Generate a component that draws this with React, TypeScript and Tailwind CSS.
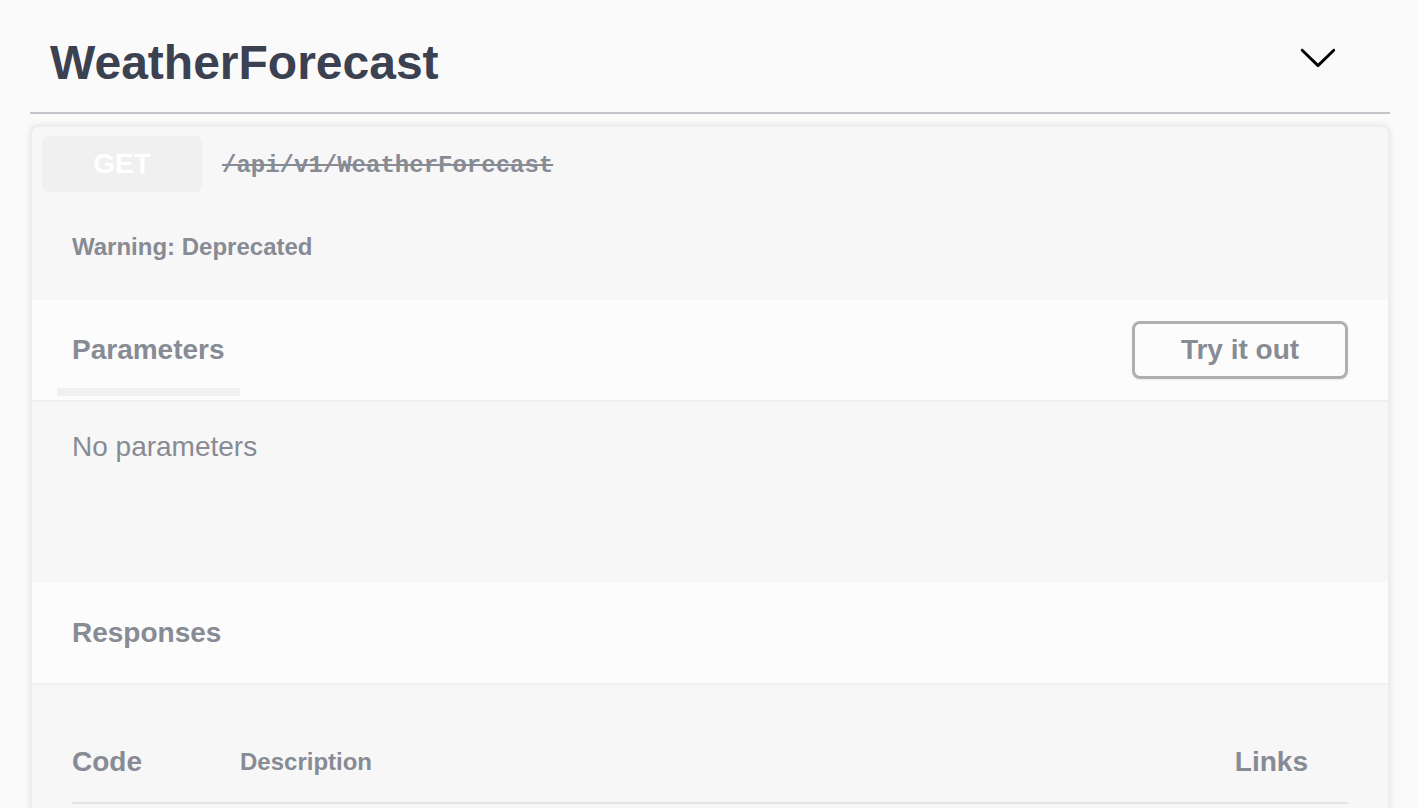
import React from "react";

const Chevron = () => (
  <svg width="40" height="40" viewBox="0 0 20 20" className="mt-[37px] shrink-0">
    <path
      fill="#000"
      d="M17.418 6.109c.272-.268.709-.268.979 0s.271.701 0 .969l-7.908 7.83c-.27.268-.707.268-.979 0l-7.908-7.83c-.27-.268-.27-.701 0-.969.271-.268.709-.268.979 0L10 13.25l7.418-7.141z"
    />
  </svg>
);

const App = () => {
  return (
    <div className="min-h-screen bg-[#fafafa] pl-[30px] pr-[28px] pb-10 font-['Liberation_Sans',Arial,sans-serif]">
      {/* tag header */}
      <div className="flex h-[114px] items-start justify-between border-b-2 border-[#c3c4c9] pl-[20px] pr-[52px]">
        <h4 className="mt-[39px] text-[48px] font-bold leading-none text-[#3b4151]">
          WeatherForecast
        </h4>
        <Chevron />
      </div>

      {/* deprecated operation */}
      <div className="mt-[11px] overflow-hidden rounded-[8px] border-2 border-[#ededed] bg-[#f7f7f7] shadow-[0_0_6px_rgba(0,0,0,0.09)]">
        <div className="flex items-center gap-[20px] p-[9px] pb-[10px] pl-[10px]">
          <span className="flex h-[56px] w-[160px] items-center justify-center rounded-[6px] bg-[#f0f0f0] text-[28px] font-bold text-white">
            GET
          </span>
          <span className="pt-[4px] font-['Liberation_Mono',monospace] text-[24px] font-bold text-[#878b94] line-through">
            /api/v1/WeatherForecast
          </span>
        </div>

        <div className="h-[98px] px-[40px] pt-[30px]">
          <p className="text-[24px] font-bold leading-[30px] text-[#878b94]">Warning: Deprecated</p>
        </div>

        {/* parameters */}
        <div className="relative flex h-[100px] items-center justify-between bg-[#fcfcfc] px-[40px] shadow-[0_1px_2px_rgba(0,0,0,0.06)]">
          <h4 className="text-[28px] font-bold leading-[34px] text-[#878b94]">Parameters</h4>
          <div className="absolute left-[25px] top-[88px] h-[8px] w-[183px] bg-[#f0f0f0]" />
          <button className="h-[58px] w-[216px] rounded-[8px] border-[3px] border-[#b0b0b0] bg-[#fcfcfc] text-[28px] font-bold text-[#878b94] shadow-[0_1px_2px_rgba(0,0,0,0.08)]">
            Try it out
          </button>
        </div>
        <div className="h-[182px] px-[40px] pt-[30px]">
          <p className="text-[28px] leading-[34px] text-[#878b94]">No parameters</p>
        </div>

        {/* responses */}
        <div className="flex h-[101px] items-center bg-[#fcfcfc] px-[40px] shadow-[0_1px_2px_rgba(0,0,0,0.06)]">
          <h4 className="text-[28px] font-bold leading-[34px] text-[#878b94]">Responses</h4>
        </div>
        <div className="px-[40px] pt-[39px] pb-[40px]">
          <div className="flex h-[82px] items-center border-b-2 border-[#e3e4e6] text-[#878b94]">
            <span className="w-[168px] text-[28px] font-bold">Code</span>
            <span className="flex-1 text-[24px] font-bold">Description</span>
            <span className="pr-[40px] text-[28px] font-bold">Links</span>
          </div>
        </div>
      </div>
    </div>
  );
};

export default App;
